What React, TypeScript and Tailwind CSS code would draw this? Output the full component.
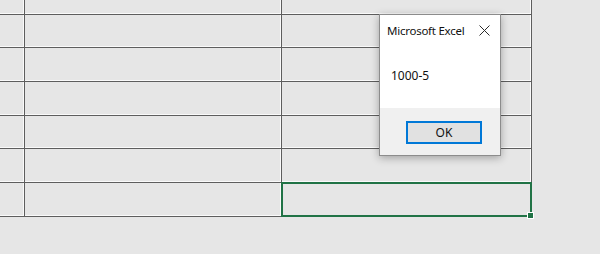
import React from "react";

const rows = [14, 32, 33, 33, 32, 33, 33];

export default function App() {
  return (
    <div
      className="relative w-[600px] h-[254px] bg-[#e6e6e6] overflow-hidden"
      style={{ fontFamily: '"Noto Sans", "Open Sans", sans-serif' }}
    >
      <div
        className="grid w-fit grid-cols-[24px_256px_249px] gap-px bg-[#5e5e5e] pr-px pb-px"
        style={{ gridTemplateRows: rows.map((r) => r + "px").join(" ") }}
      >
        {rows.map((_, ri) =>
          [0, 1, 2].map((ci) => {
            const selected = ri === 6 && ci === 2;
            return (
              <div
                key={ri + "-" + ci}
                className="relative bg-[#e6e6e6] shadow-[inset_-1px_-1px_0_#fafafa]"
              >
                {selected && (
                  <div className="absolute -left-px -top-px -right-px -bottom-px border-2 border-[#217346]">
                    <div className="absolute -right-[4px] -bottom-[4px] w-[5px] h-[5px] bg-[#217346] border border-white box-content" />
                  </div>
                )}
              </div>
            );
          })
        )}
      </div>

      <div className="absolute left-[379px] top-[14px] w-[122px] h-[142px] border border-[#8c8c8c] bg-white flex flex-col shadow-[0_2px_8px_rgba(0,0,0,0.3)]">
        <div className="flex items-center justify-between h-[30px] pl-[7px] pr-[10px] pt-px">
          <span className="text-[11.5px] tracking-[-0.25px] text-[#111] leading-none">Microsoft Excel</span>
          <svg width="11" height="11" viewBox="0 0 11 11" className="block">
            <path d="M0.5 0.5 L10.5 10.5 M10.5 0.5 L0.5 10.5" stroke="#2b2b2b" strokeWidth="1" fill="none" />
          </svg>
        </div>
        <div className="h-[63px] flex items-center pl-[11px] pb-[2px]">
          <span className="text-[12px] text-[#111] leading-none">1000-5</span>
        </div>
        <div className="flex-1 bg-[#f0f0f0] flex items-start pt-[13px] pl-[26px]">
          <button className="w-[76px] h-[23px] border-2 border-[#0078d7] bg-[#e1e1e1] text-[12px] text-[#111] leading-none flex items-center justify-center">
            OK
          </button>
        </div>
      </div>
    </div>
  );
}
